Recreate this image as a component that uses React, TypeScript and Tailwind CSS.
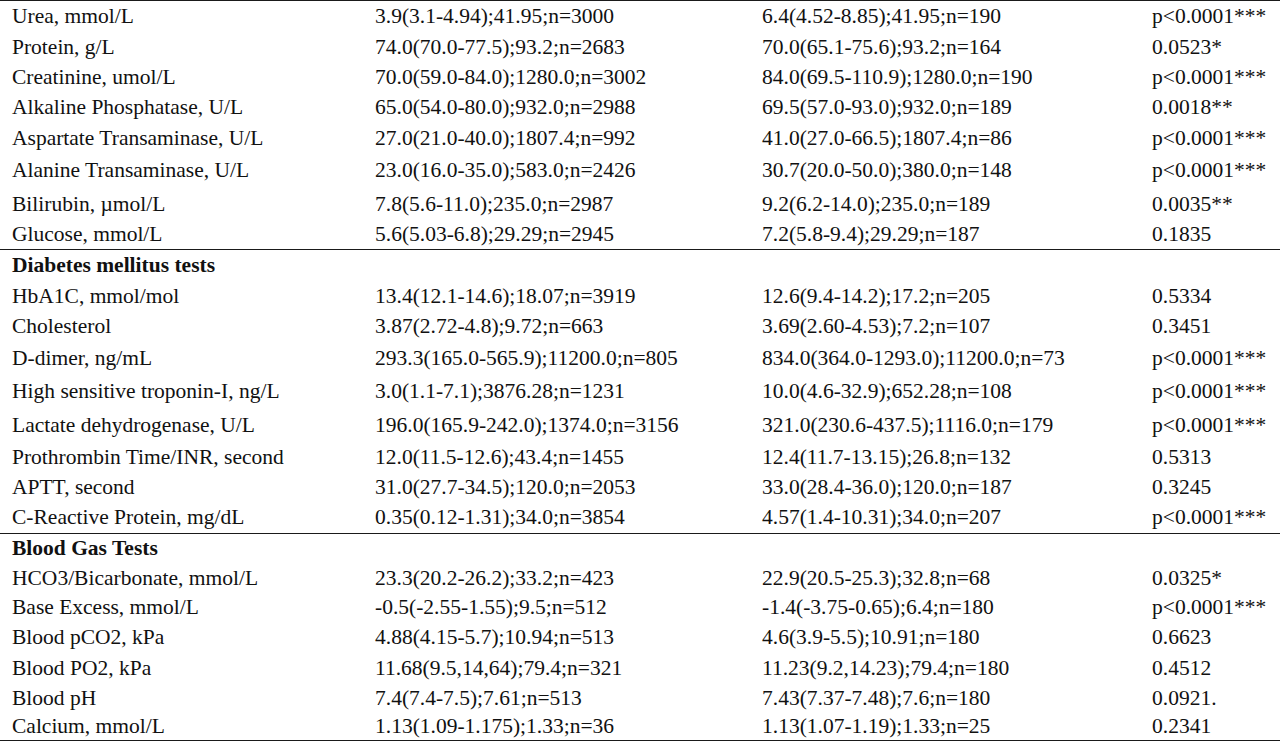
type Row = { name: string; a: string; b: string; p: string; h: string };

const liver: Row[] = [
  { name: "Urea, mmol/L", a: "3.9(3.1-4.94);41.95;n=3000", b: "6.4(4.52-8.85);41.95;n=190", p: "p<0.0001***", h: "h-[32px]" },
  { name: "Protein, g/L", a: "74.0(70.0-77.5);93.2;n=2683", b: "70.0(65.1-75.6);93.2;n=164", p: "0.0523*", h: "h-[30px]" },
  { name: "Creatinine, umol/L", a: "70.0(59.0-84.0);1280.0;n=3002", b: "84.0(69.5-110.9);1280.0;n=190", p: "p<0.0001***", h: "h-[30px]" },
  { name: "Alkaline Phosphatase, U/L", a: "65.0(54.0-80.0);932.0;n=2988", b: "69.5(57.0-93.0);932.0;n=189", p: "0.0018**", h: "h-[30px]" },
  { name: "Aspartate Transaminase, U/L", a: "27.0(21.0-40.0);1807.4;n=992", b: "41.0(27.0-66.5);1807.4;n=86", p: "p<0.0001***", h: "h-[31px]" },
  { name: "Alanine Transaminase, U/L", a: "23.0(16.0-35.0);583.0;n=2426", b: "30.7(20.0-50.0);380.0;n=148", p: "p<0.0001***", h: "h-[34px]" },
  { name: "Bilirubin, µmol/L", a: "7.8(5.6-11.0);235.0;n=2987", b: "9.2(6.2-14.0);235.0;n=189", p: "0.0035**", h: "h-[33px]" },
  { name: "Glucose, mmol/L", a: "5.6(5.03-6.8);29.29;n=2945", b: "7.2(5.8-9.4);29.29;n=187", p: "0.1835", h: "h-[28px]" },
];

const diabetes: Row[] = [
  { name: "HbA1C, mmol/mol", a: "13.4(12.1-14.6);18.07;n=3919", b: "12.6(9.4-14.2);17.2;n=205", p: "0.5334", h: "h-[29px]" },
  { name: "Cholesterol", a: "3.87(2.72-4.8);9.72;n=663", b: "3.69(2.60-4.53);7.2;n=107", p: "0.3451", h: "h-[31px]" },
  { name: "D-dimer, ng/mL", a: "293.3(165.0-565.9);11200.0;n=805", b: "834.0(364.0-1293.0);11200.0;n=73", p: "p<0.0001***", h: "h-[33px]" },
  { name: "High sensitive troponin-I, ng/L", a: "3.0(1.1-7.1);3876.28;n=1231", b: "10.0(4.6-32.9);652.28;n=108", p: "p<0.0001***", h: "h-[34px]" },
  { name: "Lactate dehydrogenase, U/L", a: "196.0(165.9-242.0);1374.0;n=3156", b: "321.0(230.6-437.5);1116.0;n=179", p: "p<0.0001***", h: "h-[33px]" },
  { name: "Prothrombin Time/INR, second", a: "12.0(11.5-12.6);43.4;n=1455", b: "12.4(11.7-13.15);26.8;n=132", p: "0.5313", h: "h-[31px]" },
  { name: "APTT, second", a: "31.0(27.7-34.5);120.0;n=2053", b: "33.0(28.4-36.0);120.0;n=187", p: "0.3245", h: "h-[30px]" },
  { name: "C-Reactive Protein, mg/dL", a: "0.35(0.12-1.31);34.0;n=3854", b: "4.57(1.4-10.31);34.0;n=207", p: "p<0.0001***", h: "h-[30px]" },
];

const gas: Row[] = [
  { name: "HCO3/Bicarbonate, mmol/L", a: "23.3(20.2-26.2);33.2;n=423", b: "22.9(20.5-25.3);32.8;n=68", p: "0.0325*", h: "h-[29px]" },
  { name: "Base Excess, mmol/L", a: "-0.5(-2.55-1.55);9.5;n=512", b: "-1.4(-3.75-0.65);6.4;n=180", p: "p<0.0001***", h: "h-[30px]" },
  { name: "Blood pCO2, kPa", a: "4.88(4.15-5.7);10.94;n=513", b: "4.6(3.9-5.5);10.91;n=180", p: "0.6623", h: "h-[30px]" },
  { name: "Blood PO2, kPa", a: "11.68(9.5,14,64);79.4;n=321", b: "11.23(9.2,14.23);79.4;n=180", p: "0.4512", h: "h-[31px]" },
  { name: "Blood pH", a: "7.4(7.4-7.5);7.61;n=513", b: "7.43(7.37-7.48);7.6;n=180", p: "0.0921.", h: "h-[29px]" },
  { name: "Calcium, mmol/L", a: "1.13(1.09-1.175);1.33;n=36", b: "1.13(1.07-1.19);1.33;n=25", p: "0.2341", h: "h-[27px]" },
];

const DataRow = ({ r }: { r: Row }) => (
  <div className={`grid grid-cols-[363px_387px_390px_1fr] items-center pl-3 ${r.h}`}>
    <span>{r.name}</span>
    <span>{r.a}</span>
    <span>{r.b}</span>
    <span>{r.p}</span>
  </div>
);

const Heading = ({ title, h }: { title: string; h: string }) => (
  <div className={`flex items-center pl-3 font-bold ${h}`}>{title}</div>
);

export default function App() {
  return (
    <div
      className="w-[1280px] h-[743px] bg-white text-[#111] text-[21.5px] leading-none overflow-hidden"
      style={{ fontFamily: '"Liberation Serif", "Times New Roman", serif' }}
    >
      <div className="border-t-[1.5px] border-[#1a1a1a]">
        {liver.map((r) => (
          <DataRow key={r.name} r={r} />
        ))}
      </div>
      <div className="border-t-[1.5px] border-[#1a1a1a]">
        <Heading title="Diabetes mellitus tests" h="h-[32px]" />
        {diabetes.map((r) => (
          <DataRow key={r.name} r={r} />
        ))}
      </div>
      <div className="border-t-[1.5px] border-[#1a1a1a] border-b-[1.5px]">
        <Heading title="Blood Gas Tests" h="h-[30px]" />
        {gas.map((r) => (
          <DataRow key={r.name} r={r} />
        ))}
      </div>
    </div>
  );
}
